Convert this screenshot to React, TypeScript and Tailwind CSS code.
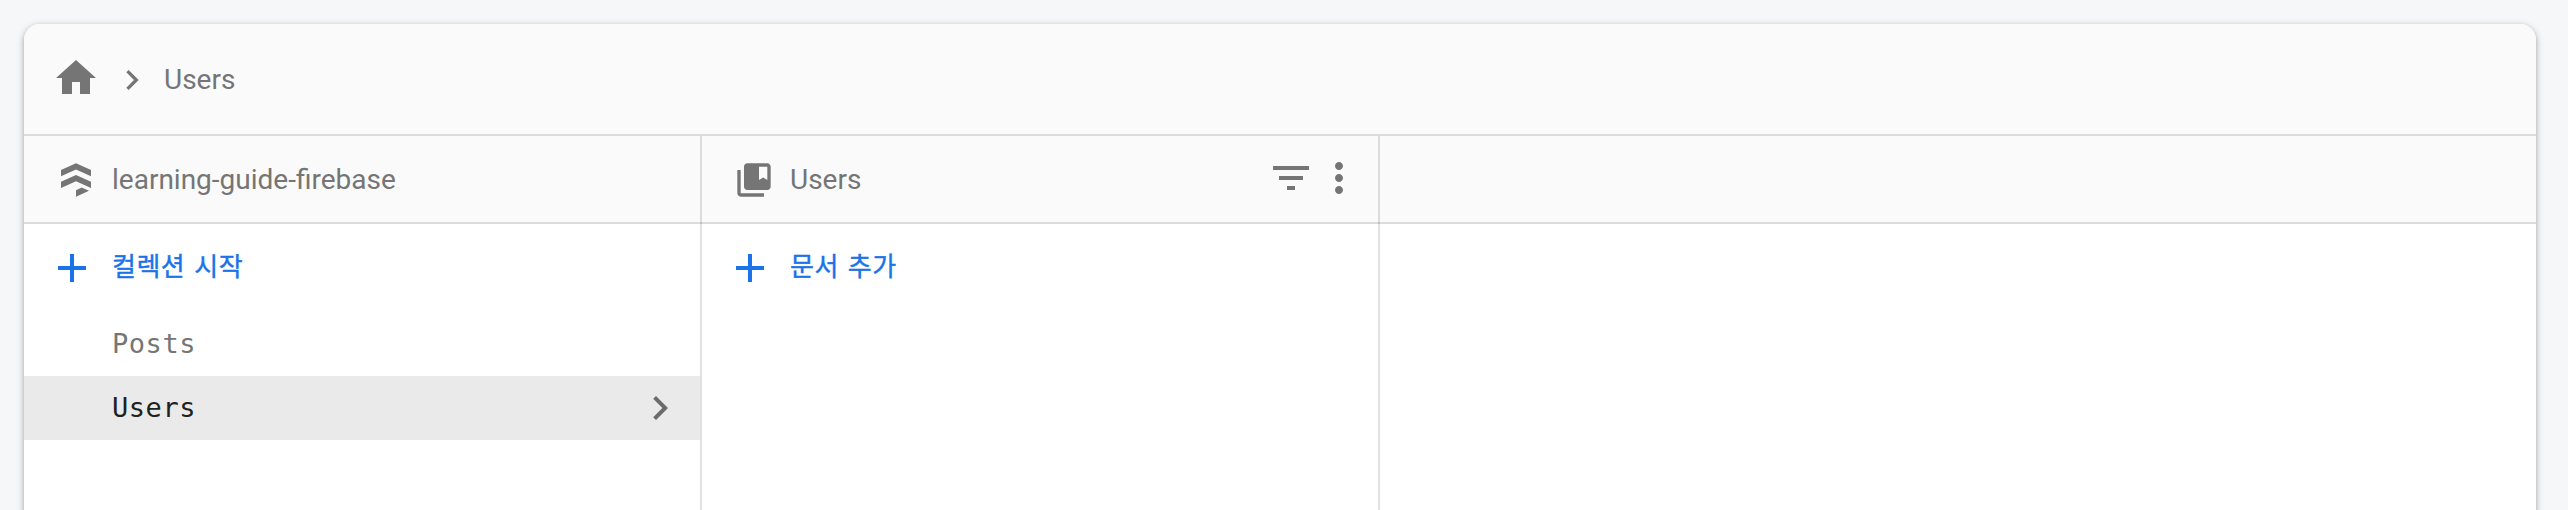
import React from "react";

type IconProps = { d: string; className: string };

function Icon({ d, className }: IconProps) {
  return (
    <svg viewBox="0 0 24 24" fill="currentColor" className={`shrink-0 ${className}`} aria-hidden="true">
      <path d={d} />
    </svg>
  );
}

const paths = {
  home: "M10 20v-6h4v6h5v-8h3L12 3 2 12h3v8z",
  chevron: "M10 6L8.59 7.41 13.17 12l-4.58 4.59L10 18l6-6z",
  firestore:
    "M12 2L3 6v3.7l9-4 9 4V6zM12 9L3 13v3.8l9-4 9 4V13zM12 18.1V22l7.8-3.5-4.4-2z",
  collection:
    "M4 6H2v14c0 1.1.9 2 2 2h14v-2H4V6zM20 2H8c-1.1 0-2 .9-2 2v12c0 1.1.9 2 2 2h12c1.1 0 2-.9 2-2V4c0-1.1-.9-2-2-2zm0 10l-2.5-1.5L15 12V4h5v8z",
  add: "M19 13h-6v6h-2v-6H5v-2h6V5h2v6h6v2z",
  filter: "M10 18h4v-2h-4v2zM3 6v2h18V6H3zm3 7h12v-2H6v2z",
  more: "M12 8c1.1 0 2-.9 2-2s-.9-2-2-2-2 .9-2 2 .9 2 2 2zm0 2c-1.1 0-2 .9-2 2s.9 2 2 2 2-.9 2-2-.9-2-2-2zm0 6c-1.1 0-2 .9-2 2s.9 2 2 2 2-.9 2-2-.9-2-2-2z",
};

function ColumnHeader({ icon, title, children }: { icon?: string; title?: string; children?: React.ReactNode }) {
  return (
    <header className="-mr-0.5 flex h-22 items-center border-b-2 border-black/12 pt-0.5 pl-8 text-[#757575]">
      {icon && <Icon d={icon} className="mr-4 size-10" />}
      <h2 className="flex-1 text-[28px] leading-10">{title}</h2>
      {children}
    </header>
  );
}

function AddButton({ label }: { label: string }) {
  return (
    <button className="flex h-22 w-full items-center gap-4 pl-6 text-[#1a73e8]">
      <Icon d={paths.add} className="size-12" />
      <span className="mb-0.5 text-[26px] leading-10 tracking-[0.5px] [word-spacing:2px] [-webkit-text-stroke:0.4px_#1a73e8]">
        {label}
      </span>
    </button>
  );
}

function CollectionRow({ name, selected }: { name: string; selected?: boolean }) {
  return (
    <li
      className={`flex h-16 items-center justify-between pr-4 pl-22 font-['DejaVu_Sans_Mono',monospace] text-[27px] leading-10 tracking-[0.55px] ${
        selected ? "bg-[#eaeaea] text-[#212121]" : "text-[#757575]"
      }`}
    >
      <span>{name}</span>
      {selected && <Icon d={paths.chevron} className="size-12 text-[#6b6b6b]" />}
    </li>
  );
}

export default function App() {
  return (
    <div className="h-[510px] overflow-hidden bg-[#f5f7f9] px-6 pt-6 pr-8 font-[Roboto,'Noto_Sans_CJK_KR',sans-serif]">
      <main className="flex h-[600px] flex-col overflow-hidden rounded-2xl bg-white shadow-[0_2px_4px_rgba(60,64,67,0.3),0_2px_6px_2px_rgba(60,64,67,0.15)]">
        <nav className="flex h-28 shrink-0 items-center border-b-2 border-black/12 bg-[#fafafa] pt-0.5 pl-7 text-[#757575]">
          <Icon d={paths.home} className="mb-1 size-12" />
          <Icon d={paths.chevron} className="ml-3 size-10" />
          <span className="ml-3 text-[28px] leading-10">Users</span>
        </nav>
        <div className="flex flex-1 bg-[linear-gradient(#fafafa_88px,#fff_88px)]">
          <section className="w-[678px] border-r-2 border-black/12">
            <ColumnHeader icon={paths.firestore} title="learning-guide-firebase" />
            <AddButton label="컬렉션 시작" />
            <ul>
              <CollectionRow name="Posts" />
              <CollectionRow name="Users" selected />
            </ul>
          </section>
          <section className="w-[678px] border-r-2 border-black/12">
            <ColumnHeader icon={paths.collection} title="Users">
              <div className="mr-[17.5px] mb-1 flex">
                <Icon d={paths.filter} className="size-12" />
                <Icon d={paths.more} className="size-12" />
              </div>
            </ColumnHeader>
            <AddButton label="문서 추가" />
          </section>
          <section className="flex-1">
            <ColumnHeader />
          </section>
        </div>
      </main>
    </div>
  );
}
